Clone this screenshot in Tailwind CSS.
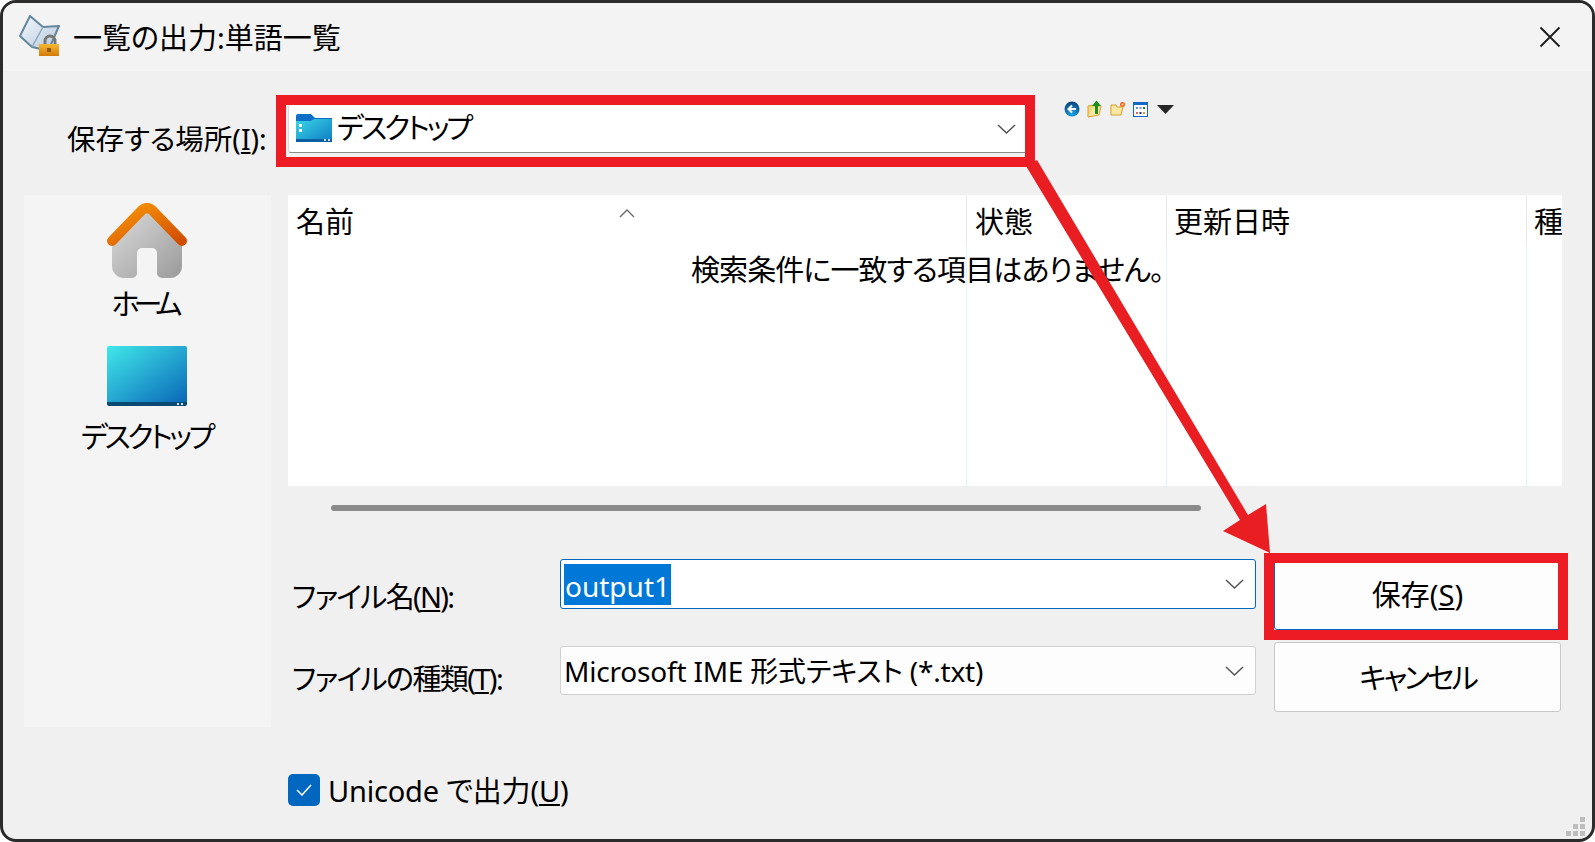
<!DOCTYPE html>
<html lang="ja">
<head>
<meta charset="UTF-8">
<title>一覧の出力:単語一覧</title>
<script src="https://cdn.jsdelivr.net/npm/@tailwindcss/browser@4"></script>
</head>
<body class="bg-white">
<div class="relative w-[1595px] h-[842px] overflow-hidden bg-white font-['Noto_Sans','Noto_Sans_CJK_JP',sans-serif] text-[29px] leading-none text-black [font-feature-settings:'palt']">

  <!-- dialog window -->
  <div class="w-full h-full rounded-[16px] border-[3px] border-[#2b2b2b] bg-[#f0f0f0] overflow-hidden">

    <!-- title bar -->
    <div class="h-[68px] bg-[#f3f3f3] flex items-center pl-[16px] pr-[31px]">
      <svg class="w-[41px] h-[41px] mt-[-4px]" viewBox="0 0 41 41">
        <defs>
          <linearGradient id="bookFill" x1="0" y1="0" x2="1" y2="1"><stop offset="0" stop-color="#f4f8fc"/><stop offset="1" stop-color="#b4c8dc"/></linearGradient>
          <linearGradient id="lockFill" x1="0" y1="0" x2="0" y2="1"><stop offset="0" stop-color="#f8b832"/><stop offset="1" stop-color="#d47a08"/></linearGradient>
        </defs>
        <path d="M1 21 L11 1 L24 12 L40 11 L30 34 L22 34 L13 32 Z" fill="url(#bookFill)" stroke="#64879e" stroke-width="2" stroke-linejoin="round"/>
        <path d="M13 32 L24 12" stroke="#8fa9bc" stroke-width="1.5"/>
        <path d="M26 31 V26 a5 5 0 0 1 10 0 V31" fill="none" stroke="#777" stroke-width="3"/>
        <rect x="20" y="29" width="20" height="12" fill="url(#lockFill)"/>
        <rect x="28" y="33" width="4" height="4" fill="#8a5a10"/>
      </svg>
      <span class="ml-[13px]">一覧の出力:単語一覧</span>
      <svg class="ml-auto w-[22px] h-[22px]" viewBox="0 0 22 22"><path d="M1.5 1.5 L20.5 20.5 M20.5 1.5 L1.5 20.5" stroke="#1a1a1a" stroke-width="1.8" fill="none"/></svg>
    </div>

    <!-- location row -->
    <div class="flex pt-[34px] h-[124px]">
      <div class="w-[285px] pl-[64px] pt-[20px] whitespace-nowrap text-[28.5px]">保存する場所(<span class="underline underline-offset-2">I</span>):</div>
      <div class="w-[742px] h-[48px] flex items-center bg-white border-l border-[#d8d8d8] border-b-[#8a8a8a] border-b rounded-[3px] pl-[7px] pr-[14px]">
        <svg class="w-[36px] h-[28px] shrink-0 mt-[-2px]" viewBox="0 0 36 28">
          <defs><linearGradient id="folderFill" x1="0" y1="0" x2="1" y2="1"><stop offset="0" stop-color="#38d6e6"/><stop offset="1" stop-color="#0f7cc4"/></linearGradient></defs>
          <path d="M0 2 a2 2 0 0 1 2-2 H15 L19 4 H36 V25 H0 Z" fill="#0f6fc6"/>
          <path d="M0 7 H15 L18 5 H36 V26 a2 2 0 0 1-2 2 H2 a2 2 0 0 1-2-2 Z" fill="url(#folderFill)"/>
          <rect x="0" y="25" width="36" height="3" fill="#0b5f9e"/>
          <rect x="3" y="10" width="3" height="3" fill="#fff"/><rect x="3" y="15" width="3" height="3" fill="#fff"/>
          <rect x="28" y="25" width="2" height="2" fill="#cde"/><rect x="32" y="25" width="2" height="2" fill="#cde"/>
        </svg>
        <span class="ml-[5px] mb-[3px] tracking-[-3px]">デスクトップ</span>
        <svg class="ml-auto w-[19px] h-[10px]" viewBox="0 0 19 10"><path d="M1 1 L9.5 9 L18 1" fill="none" stroke="#555" stroke-width="1.5"/></svg>
      </div>
      <!-- toolbar -->
      <div class="flex items-center h-[16px] mt-[-4px] ml-[34px] gap-[7px]">
        <svg class="w-[16px] h-[16px]" viewBox="0 0 16 16">
          <defs><radialGradient id="backFill" cx="0.5" cy="0.8" r="0.8"><stop offset="0" stop-color="#18a8e8"/><stop offset="1" stop-color="#0b3f78"/></radialGradient></defs>
          <circle cx="8" cy="8" r="7.5" fill="url(#backFill)"/><path d="M12 8 H5 M8 4.5 L4.5 8 L8 11.5" stroke="#fff" stroke-width="2" fill="none"/>
        </svg>
        <svg class="w-[16px] h-[18px]" viewBox="0 0 16 18">
          <path d="M1 6 L7 5 V15 L1 17 Z" fill="#f6d878" stroke="#d4a12c"/><path d="M7 6 H14 L12 15 L1 17" fill="#fbe7a4" stroke="#d4a12c"/>
          <path d="M8 14 V6 H5 L9.500 0.500 L14 6 H11 V14 Z" fill="#1d8f1d"/>
        </svg>
        <svg class="w-[16px] h-[16px]" viewBox="0 0 16 16">
          <path d="M1 4 H6 L7 6 H13 L11 14 H1 Z" fill="#fbe7a4" stroke="#d4a12c"/>
          <circle cx="12.500" cy="3.500" r="2.500" fill="#f0641e"/><circle cx="12.500" cy="3.500" r="1" fill="#ffe9a0"/>
        </svg>
        <svg class="w-[15px] h-[15px]" viewBox="0 0 15 15">
          <rect x="0.500" y="0.500" width="14" height="14" fill="#fff" stroke="#1268c4"/><rect x="0" y="0" width="15" height="3" fill="#1268c4"/>
          <rect x="3" y="5" width="2" height="2" fill="#6a8fd8"/><rect x="6.500" y="5" width="2" height="2" fill="#8a8ad0"/><rect x="10" y="5" width="2" height="2" fill="#1a8a2a"/>
          <rect x="3" y="10" width="2" height="2" fill="#e06a5a"/><rect x="6.500" y="10" width="2" height="2" fill="#1b3a8a"/><rect x="10" y="10" width="2" height="2" fill="#e09a1a"/>
        </svg>
        <svg class="w-[17px] h-[9px] ml-[2px]" viewBox="0 0 17 9"><path d="M0 0 H17 L8.500 9 Z" fill="#262626"/></svg>
      </div>
    </div>

    <!-- sidebar + file area -->
    <div class="flex pl-[21px]">
      <div class="w-[247px] h-[532px] bg-[#f4f4f4] flex flex-col items-center pt-[8px] pr-[2px]">
        <svg class="w-[80px] h-[75px] shrink-0" viewBox="0 0 80 75">
          <defs>
            <linearGradient id="homeBody" x1="0" y1="0" x2="1" y2="1"><stop offset="0" stop-color="#dcdcdc"/><stop offset="1" stop-color="#9a9a9a"/></linearGradient>
            <linearGradient id="homeRoof" x1="0" y1="0" x2="1" y2="1"><stop offset="0" stop-color="#f8980a"/><stop offset="1" stop-color="#d24c00"/></linearGradient>
          </defs>
          <path d="M40 8 L75 40 V63 a12 12 0 0 1-12 12 H55 a5 5 0 0 1-5-5 V50 a5 5 0 0 0-5-5 H35 a5 5 0 0 0-5 5 V70 a5 5 0 0 1-5 5 H17 a12 12 0 0 1-12-12 V40 Z" fill="url(#homeBody)"/>
          <path d="M5 38 L35 7 Q40 3 45 7 L75 38" fill="none" stroke="url(#homeRoof)" stroke-width="10" stroke-linecap="round" stroke-linejoin="round"/>
        </svg>
        <span class="mt-[11px] tracking-[-6px] mr-[5px]">ホーム</span>
        <svg class="w-[80px] h-[60px] mt-[28px] shrink-0" viewBox="0 0 80 60">
          <defs><linearGradient id="deskFill" x1="0" y1="0" x2="1" y2="1"><stop offset="0" stop-color="#40e8ea"/><stop offset="1" stop-color="#0a68b8"/></linearGradient></defs>
          <path d="M2 0 H78 a2 2 0 0 1 2 2 V56 H0 V2 a2 2 0 0 1 2-2 Z" fill="url(#deskFill)"/>
          <path d="M0 56 H80 V58 a2 2 0 0 1-2 2 H2 a2 2 0 0 1-2-2 Z" fill="#0a4a72"/>
          <rect x="70" y="57" width="2" height="2" fill="#cfe6f2"/><rect x="74" y="57" width="2" height="2" fill="#cfe6f2"/>
        </svg>
        <span class="mt-[16px] tracking-[-3.300px]">デスクトップ</span>
      </div>

      <div class="ml-[17px] w-[1274px]">
        <!-- list view -->
        <div class="relative h-[291px] bg-white flex overflow-hidden">
          <div class="w-[679px] h-full border-r border-[#e5f0fb]"><div class="h-[50px] border-r border-[#e8e8e8] mr-[-1px] pl-[8px] pt-[12px] relative">名前
            <svg class="absolute left-[331px] top-[14px] w-[16px] h-[9px]" viewBox="0 0 16 9"><path d="M1 8 L8 1 L15 8" fill="none" stroke="#666" stroke-width="1.300"/></svg></div></div>
          <div class="w-[200px] h-full border-r border-[#e5f0fb]"><div class="h-[50px] border-r border-[#e8e8e8] mr-[-1px] pl-[8px] pt-[12px]">状態</div></div>
          <div class="w-[360px] h-full border-r border-[#e5f0fb]"><div class="h-[50px] border-r border-[#e8e8e8] mr-[-1px] pl-[7px] pt-[12px]">更新日時</div></div>
          <div class="w-[35px] pl-[7px] pt-[12px] whitespace-nowrap">種</div>
          <div class="absolute left-[403px] top-[60px] whitespace-nowrap tracking-[-0.9px]">検索条件に一致する項目はありません。</div>
        </div>
        <!-- horizontal scrollbar -->
        <div class="mt-[19px] ml-[43px] w-[870px] h-[6px] rounded-full bg-[#8a8a8a]"></div>

        <!-- form -->
        <div class="flex mt-[48px]">
          <div class="w-[272px] pl-[4px] pt-[12px]">
            <div class="h-[50px] flex items-center whitespace-nowrap tracking-[-1.7px]">ファイル名(<span class="underline underline-offset-2">N</span>):</div>
            <div class="h-[50px] mt-[32px] flex items-center whitespace-nowrap tracking-[-1.6px]">ファイルの種類(<span class="underline underline-offset-2">T</span>):</div>
          </div>
          <div class="w-[696px]">
            <div class="h-[50px] border border-[#0067c0] rounded-[3px] bg-white flex items-center pl-[3px] pr-[11px]">
              <span class="h-[41px] leading-[45px] bg-[#0078d7] text-white px-[1px] text-[28px]">output1</span>
              <svg class="ml-auto w-[19px] h-[10px]" viewBox="0 0 19 10"><path d="M1 1 L9.500 9 L18 1" fill="none" stroke="#555" stroke-width="1.500"/></svg>
            </div>
            <div class="h-[49px] mt-[37px] border border-[#d0d0d0] rounded-[3px] bg-[#fdfdfd] flex items-center pl-[3px] pr-[11px]">
              <span class="text-[28px] tracking-[-0.2px]">Microsoft IME 形式テキスト (*.txt)</span>
              <svg class="ml-auto w-[19px] h-[10px]" viewBox="0 0 19 10"><path d="M1 1 L9.500 9 L18 1" fill="none" stroke="#555" stroke-width="1.500"/></svg>
            </div>
          </div>
          <div class="ml-[18px] w-[287px]">
            <div class="h-[71px] border border-[#0067c0] rounded-[3px] bg-[#fdfdfd] flex items-center justify-center">保存(<span class="underline underline-offset-2">S</span>)</div>
            <div class="h-[70px] mt-[12px] border border-[#c8c8c8] rounded-[3px] bg-[#fdfdfd] flex items-center justify-center tracking-[-3px]">キャンセル</div>
          </div>
        </div>

        <!-- checkbox -->
        <div class="flex items-center mt-[62px]">
          <span class="w-[32px] h-[32px] rounded-[5px] bg-[#0067c0] flex items-center justify-center">
            <svg class="w-[16px] h-[12px]" viewBox="0 0 16 12"><path d="M1 6 L6 11 L15 1" fill="none" stroke="#fff" stroke-width="1.500"/></svg>
          </span>
          <span class="ml-[8px] whitespace-nowrap tracking-[-0.2px]">Unicode で出力(<span class="underline underline-offset-2">U</span>)</span>
        </div>
      </div>
    </div>
  </div>

  <!-- resize grip -->
  <svg class="absolute left-[1566px] top-[817px] w-[20px] h-[20px]" viewBox="0 0 20 20" fill="#bdbdbd">
    <rect x="14" y="0" width="5" height="5"/><rect x="7" y="7" width="5" height="5"/><rect x="14" y="7" width="5" height="5"/>
    <rect x="0" y="14" width="5" height="5"/><rect x="7" y="14" width="5" height="5"/><rect x="14" y="14" width="5" height="5"/>
  </svg>

  <!-- red annotations -->
  <svg class="absolute left-0 top-0 w-[1595px] h-[842px]" viewBox="0 0 1595 842">
    <polygon points="1026,166 1037,160 1248,515 1266,504 1270,553 1223,531 1240,520" fill="#e91e22"/>
  </svg>
  <div class="absolute left-[276px] top-[95px] w-[759px] h-[72px] border-[10px] border-[#ed1c24]"></div>
  <div class="absolute left-[1264px] top-[553px] w-[304px] h-[87px] border-[10px] border-[#ed1c24]"></div>
</div>
</body>
</html>
